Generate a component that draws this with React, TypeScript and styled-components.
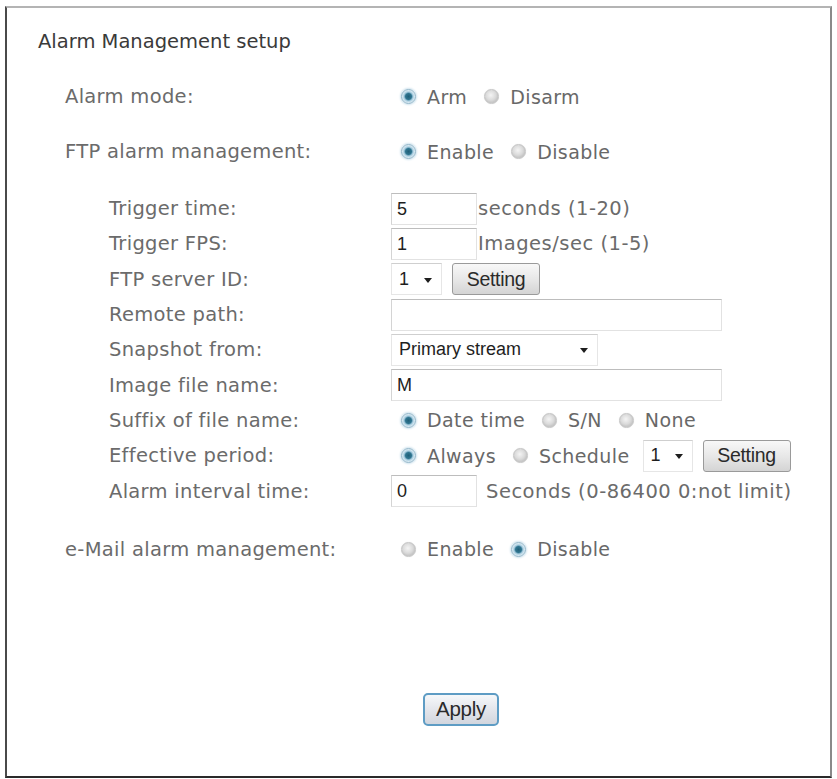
import React from "react";
import styled, { createGlobalStyle } from "styled-components";

const GlobalStyle = createGlobalStyle`
  html, body {
    margin: 0;
    padding: 0;
    background: #ffffff;
  }
  body {
    font-family: "DejaVu Sans", Verdana, sans-serif;
  }
`;

const Frame = styled.div`
  box-sizing: border-box;
  margin: 6px 5px 0 5px;
  height: 772px;
  border-style: solid;
  border-width: 2px;
  border-color: #b4b4b4 #8a8a8a #2a2a2a #4a4a4a;
  padding: 22px 0 0 0;
`;

const Heading = styled.h1`
  margin: 0 0 15px 31px;
  font-size: 19.5px;
  line-height: 24px;
  font-weight: normal;
  color: #3a3a3a;
`;

const Row = styled.div<{ $indent: number; $height: number }>`
  display: grid;
  grid-template-columns: 384px auto;
  align-items: center;
  height: ${(p) => p.$height}px;
  & > :first-child {
    padding-left: ${(p) => p.$indent}px;
  }
`;

const Label = styled.div`
  font-size: 19.5px;
  letter-spacing: 0.3px;
  color: #6b6b6b;
  white-space: nowrap;
`;

const Controls = styled.div`
  display: flex;
  align-items: center;
  white-space: nowrap;
`;

const SubSection = styled.div<{ $top: number }>`
  margin-top: ${(p) => p.$top}px;
`;

const RadioGroup = styled.label`
  display: inline-flex;
  align-items: center;
  margin-right: 7px;
  font-size: 19px;
  letter-spacing: 0.4px;
  color: #686868;
`;

const RadioDot = styled.span<{ $checked?: boolean }>`
  box-sizing: border-box;
  width: 15px;
  height: 15px;
  border-radius: 50%;
  margin: 0 11px 0 10px;
  border: 1px solid ${(p) => (p.$checked ? "#8fb4c8" : "#c4c4c4")};
  background: ${(p) =>
    p.$checked
      ? "radial-gradient(circle at 50% 50%, #1f5f78 0, #2f7590 3px, #a8cde0 4.5px, #e4f0f6 6.5px)"
      : "radial-gradient(circle at 45% 40%, #f4f4f4 0, #dadada 5px, #c8c8c8 7px)"};
  box-shadow: ${(p) => (p.$checked ? "0 0 2px 1px #cfe3ee" : "0 0 1px #dddddd")};
`;

const TextBox = styled.div<{ $width: number }>`
  box-sizing: border-box;
  width: ${(p) => p.$width}px;
  height: 32px;
  border: 1px solid #e2e2e2;
  border-top-color: #bdbdbd;
  border-left-color: #d4d4d4;
  padding: 3px 5px;
  font-family: "Liberation Sans", Arial, sans-serif;
  font-size: 18px;
  line-height: 24px;
  color: #1e1e1e;
  background: #fff;
`;

const Select = styled.div<{ $width: number; $gap?: number }>`
  box-sizing: border-box;
  width: ${(p) => p.$width}px;
  height: 32px;
  margin-left: ${(p) => p.$gap ?? 0}px;
  display: flex;
  align-items: center;
  justify-content: space-between;
  border: 1px solid #e6e6e6;
  border-top-color: #cfcfcf;
  padding: 0 9px 0 7px;
  font-family: "Liberation Sans", Arial, sans-serif;
  font-size: 18px;
  color: #1e1e1e;
  background: #fff;
`;

const Caret = styled.span`
  width: 0;
  height: 0;
  border-left: 4px solid transparent;
  border-right: 4px solid transparent;
  border-top: 5px solid #1e1e1e;
  margin-top: 2px;
`;

const Button = styled.button<{ $primary?: boolean }>`
  box-sizing: border-box;
  height: ${(p) => (p.$primary ? 33 : 32)}px;
  width: ${(p) => (p.$primary ? 76 : 88)}px;
  padding: 0;
  margin-left: ${(p) => (p.$primary ? 0 : 10)}px;
  border: ${(p) => (p.$primary ? "2px solid #5e9cc4" : "1px solid #9a9a9a")};
  border-radius: ${(p) => (p.$primary ? 5 : 3)}px;
  background: ${(p) =>
    p.$primary
      ? "linear-gradient(#f6f8fa, #e2e4ea 55%, #d2d6de)"
      : "linear-gradient(#f8f8f8, #e6e6e6 55%, #d4d4d4)"};
  font-family: "Liberation Sans", Arial, sans-serif;
  font-size: ${(p) => (p.$primary ? 20.5 : 19.5)}px;
  color: #2a2a2a;
  letter-spacing: -0.3px;
`;

const Hint = styled.span<{ $gap: number }>`
  margin-left: ${(p) => p.$gap}px;
  font-size: 19.5px;
  letter-spacing: 0.5px;
  color: #6b6b6b;
`;

const Footer = styled.div`
  margin-top: 116px;
  padding-left: 416px;
`;

type Opt = { text: string; checked?: boolean };

const Radios = ({ options }: { options: Opt[] }) => (
  <>
    {options.map((o) => (
      <RadioGroup key={o.text}>
        <RadioDot $checked={o.checked} />
        {o.text}
      </RadioGroup>
    ))}
  </>
);

const TopRow = ({ label, children }: { label: string; children: React.ReactNode }) => (
  <Row $indent={58} $height={55}>
    <Label>{label}</Label>
    <Controls>{children}</Controls>
  </Row>
);

const SubRow = ({ label, children }: { label: string; children: React.ReactNode }) => (
  <Row $indent={102} $height={35.3}>
    <Label>{label}</Label>
    <Controls>{children}</Controls>
  </Row>
);

export default function App() {
  return (
    <>
      <GlobalStyle />
      <Frame>
        <Heading>Alarm Management setup</Heading>
        <TopRow label="Alarm mode:">
          <Radios options={[{ text: "Arm", checked: true }, { text: "Disarm" }]} />
        </TopRow>
        <TopRow label="FTP alarm management:">
          <Radios options={[{ text: "Enable", checked: true }, { text: "Disable" }]} />
        </TopRow>
        <SubSection $top={12}>
          <SubRow label="Trigger time:">
            <TextBox $width={86}>5</TextBox>
            <Hint $gap={1}>seconds (1-20)</Hint>
          </SubRow>
          <SubRow label="Trigger FPS:">
            <TextBox $width={86}>1</TextBox>
            <Hint $gap={1}>Images/sec (1-5)</Hint>
          </SubRow>
          <SubRow label="FTP server ID:">
            <Select $width={51}>
              1 <Caret />
            </Select>
            <Button type="button">Setting</Button>
          </SubRow>
          <SubRow label="Remote path:">
            <TextBox $width={331} />
          </SubRow>
          <SubRow label="Snapshot from:">
            <Select $width={207}>
              Primary stream <Caret />
            </Select>
          </SubRow>
          <SubRow label="Image file name:">
            <TextBox $width={331}>M</TextBox>
          </SubRow>
          <SubRow label="Suffix of file name:">
            <Radios
              options={[{ text: "Date time", checked: true }, { text: "S/N" }, { text: "None" }]}
            />
          </SubRow>
          <SubRow label="Effective period:">
            <Radios options={[{ text: "Always", checked: true }, { text: "Schedule" }]} />
            <Select $width={50} $gap={6}>
              1 <Caret />
            </Select>
            <Button type="button">Setting</Button>
          </SubRow>
          <SubRow label="Alarm interval time:">
            <TextBox $width={86}>0</TextBox>
            <Hint $gap={9}>Seconds (0-86400 0:not limit)</Hint>
          </SubRow>
        </SubSection>
        <SubSection $top={13}>
          <TopRow label="e-Mail alarm management:">
            <Radios options={[{ text: "Enable" }, { text: "Disable", checked: true }]} />
          </TopRow>
        </SubSection>
        <Footer>
          <Button type="button" $primary>
            Apply
          </Button>
        </Footer>
      </Frame>
    </>
  );
}
